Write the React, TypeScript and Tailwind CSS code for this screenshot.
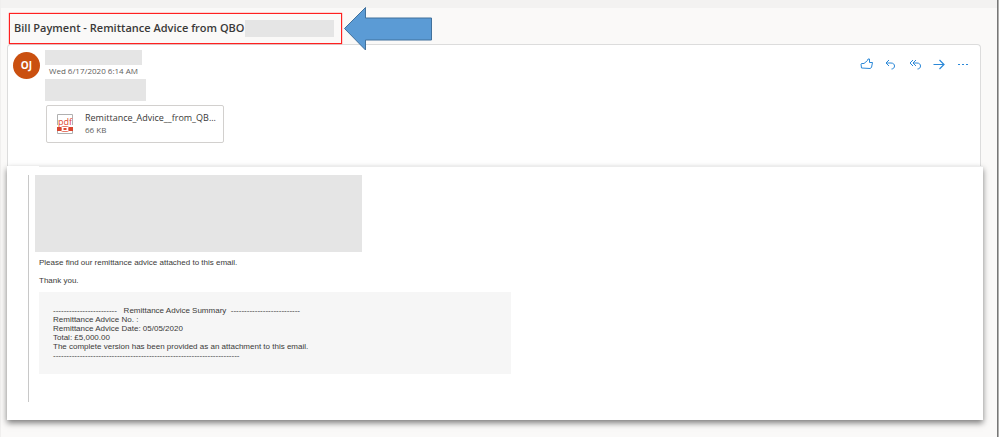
import type { ReactNode } from 'react'

const summary = [
  'Remittance Advice No. :',
  'Remittance Advice Date: 05/05/2020',
  'Total: £5,000.00',
  'The complete version has been provided as an attachment to this email.'
]

function ActionButton({ label, children }: { label: string; children: ReactNode }) {
  return (
    <button type="button" aria-label={label} className="flex h-4 w-4 items-center justify-center">
      <svg viewBox="0 0 16 16" className="h-4 w-4" fill="none" stroke="#2b88d8" strokeWidth="1">
        {children}
      </svg>
    </button>
  )
}

function PdfIcon() {
  return (
    <svg viewBox="0 0 18 22" className="block h-[22px] w-[18px]">
      <path d="M1.500 12V1.500H16.500V12M1.500 18V20.500H16.500V18" fill="none" stroke="#b0b0b0" />
      <text x="9" y="12" textAnchor="middle" fontSize="9" fontFamily="Open Sans, sans-serif" fill="#e0442e">pdf</text>
      <rect x="1" y="14" width="4" height="4" fill="#d9452f" />
      <rect x="13" y="14" width="4" height="4" fill="#d9452f" />
      <rect x="5.500" y="13.500" width="7" height="5" rx="1" fill="#fff" stroke="#e87a6a" />
      <rect x="7.500" y="15" width="3" height="2" fill="#d9452f" />
    </svg>
  )
}

export default function App() {
  return (
    <div className="flex min-h-screen bg-[#faf9f8] font-['Open_Sans','Noto_Sans',sans-serif] text-[#3b3a39]">
      <div className="min-w-0 flex-1 border-l border-[#f0efee]">
        <div className="h-2 bg-[#f3f2f1]" />

        <main className="pt-[5px] pr-[14px] pb-4 pl-[6px]">
          {/* Subject */}
          <div className="relative ml-0.5 flex h-[31px] w-[333px] items-center border border-[#ff2020] pl-1 shadow-[0_0_1px_#ff2020]">
            <h1 className="text-[11px] font-semibold whitespace-nowrap">Bill Payment - Remittance Advice from QBO</h1>
            <div className="mr-[7px] ml-auto h-[17px] w-[91px] bg-[#e5e5e5]" />
            <svg viewBox="0 0 90 46" className="absolute top-[-8px] left-[333px] z-10 h-[46px] w-[90px]">
              <path d="M1.500 22.500L22.500 1.500V12H88.500V34H22.500V44Z" fill="#5b9bd5" stroke="#41719c" />
            </svg>
          </div>

          {/* Message header */}
          <header className="mr-0.5 flex h-[122px] items-start rounded-t-sm border-x border-t border-[#dcdcdc] bg-white pt-[5px] pl-[5px]">
            <div className="mt-0.5 flex h-[27px] w-[27px] shrink-0 items-center justify-center rounded-full bg-[#ca5010] text-[10px] font-bold text-white">
              OJ
            </div>
            <div className="ml-[5px]">
              <div className="h-[15px] w-[97px] bg-[#e5e5e5]" />
              <p className="ml-1 h-[14px] text-[8px] leading-3 text-[#605e5c]">Wed 6/17/2020 6:14 AM</p>
              <div className="h-[22px] w-[101px] bg-[#e5e5e5]" />
              <button type="button" className="mt-1 ml-px flex h-[38px] w-[178px] items-center rounded-xs border border-[#d2d0ce] text-left">
                <span className="ml-[9px]"><PdfIcon /></span>
                <span className="ml-[11px]">
                  <span className="block text-[9px] leading-3 whitespace-nowrap">Remittance_Advice__from_QB...</span>
                  <span className="block text-[8px] leading-3 text-[#605e5c]">66 KB</span>
                </span>
              </button>
            </div>
            <div className="mt-1.5 mr-[9px] ml-auto flex gap-2">
              <ActionButton label="Like">
                <path d="M2.500 7.500H5L8.500 4.500L9 3H10.500V6.500H13.500L12.500 11.500L11 12.500L2.500 12L2 8Z" strokeLinejoin="round" />
              </ActionButton>
              <ActionButton label="Reply">
                <path d="M6 4L3 7L6 10M3 7H8C10.500 7 11.500 8.500 11.500 10C11.500 11.500 10.500 13 8.500 13" />
              </ActionButton>
              <ActionButton label="Reply all">
                <path d="M6 4L3 7L6 10M9 4L6 7L9 10M6 7H10C12.500 7 13.500 8.500 13.500 10C13.500 11.500 12.500 13 10.500 13" />
              </ActionButton>
              <ActionButton label="Forward">
                <path d="M2.500 8.500H13M8.500 4L13 8.500L8.500 13" strokeWidth="1.200" />
              </ActionButton>
              <ActionButton label="More actions">
                <path d="M3 8.500H5M7 8.500H9M11 8.500H13" />
              </ActionButton>
            </div>
          </header>

          {/* Message body */}
          <article className="relative bg-white px-[21px] pb-[18px] font-['Liberation_Sans',Arial,sans-serif] text-[8px] leading-[9px] shadow-[0_3px_6px_rgba(0,0,0,0.5)]">
            <div className="-mr-[21px] ml-[11px] h-[9px] border-t border-[#ececec]" />
            <div className="min-h-[227px] border-l border-[#c8c8c8] pl-[6px]">
              <div className="h-[77px] max-w-[327px] bg-[#e5e5e5]" />
              <div className="ml-1">
                <p className="mt-[6px]">Please find our remittance advice attached to this email.</p>
                <p className="mt-[9px]">Thank you.</p>
                <div className="mt-[7px] max-w-[472px] bg-[#f6f6f6] px-[14px] py-[14px]">
                  <p className="whitespace-pre">{'-'.repeat(24)}{'   Remittance Advice Summary  '}{'-'.repeat(26)}</p>
                  {summary.map(line => <p key={line}>{line}</p>)}
                  <p>{'-'.repeat(70)}</p>
                </div>
              </div>
            </div>
          </article>
        </main>
      </div>
      <div className="w-0.5 shrink-0 border-l border-[#777] bg-[#b0b0ae]" />
    </div>
  )
}
